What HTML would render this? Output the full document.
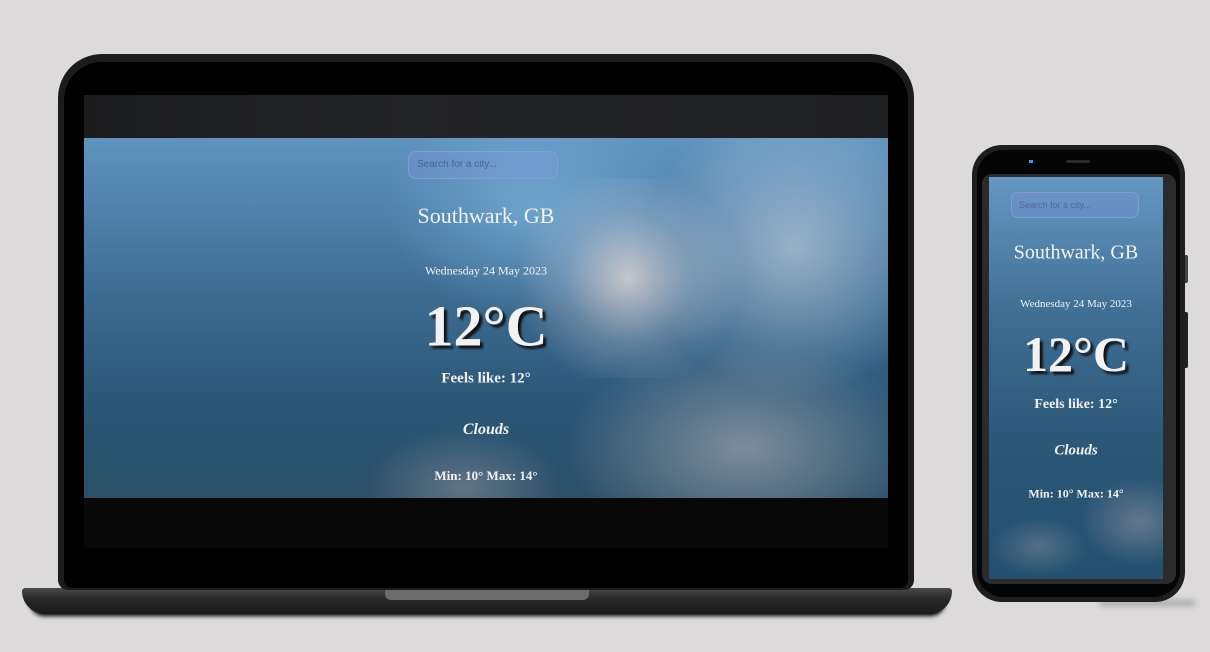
<!DOCTYPE html>
<html><head><style>
*{margin:0;padding:0;box-sizing:border-box}
body{width:1210px;height:652px;background:#dcdadb;position:relative;overflow:hidden;font-family:"Liberation Serif",serif}
.abs{position:absolute}
.t{position:absolute;left:0;right:0;text-align:center;color:#f2f2f2;transform:translateY(-50%)}
</style></head><body>
<div class="abs" style="left:30px;top:602px;width:915px;height:14px;background:#000;border-radius:0 0 40px 40px;filter:blur(2px)"></div>
<div class="abs" style="left:22px;top:588px;width:930px;height:26px;background:linear-gradient(#4a4a4a,#2a2a2a 40%,#1a1a1a);border-radius:4px 4px 30px 30px"></div>
<div class="abs" style="left:385px;top:588px;width:204px;height:12px;background:#6c6c6c;border-radius:0 0 6px 6px"></div>
<div class="abs" style="left:58px;top:54px;width:856px;height:536px;background:#1c1c1c;border-radius:44px 44px 10px 10px"></div>
<div class="abs" style="left:64px;top:62px;width:844px;height:526px;background:#000;border-radius:38px 38px 8px 8px"></div>
<div class="abs" style="left:84px;top:95px;width:804px;height:43px;background:linear-gradient(90deg,#1b1c1e,#242528 40%,#1f2022)"></div>
<div class="abs" style="left:84px;top:498px;width:804px;height:50px;background:#080808"></div>
<div class="abs" style="left:84px;top:138px;width:804px;height:360px;overflow:hidden;background:linear-gradient(180deg,#5f94c0 0%,#3f6f96 40%,#2a5675 75%,#2b5068 100%)">
  <div class="abs" style="left:300px;top:-40px;width:300px;height:220px;background:radial-gradient(ellipse,rgba(130,185,225,.6),rgba(130,185,225,0) 70%)"></div>
  <div class="abs" style="left:420px;top:40px;width:250px;height:200px;background:radial-gradient(circle,rgba(240,225,220,.75),rgba(200,200,210,.3) 40%,rgba(200,200,210,0) 70%)"></div>
  <div class="abs" style="left:560px;top:-40px;width:300px;height:300px;background:radial-gradient(ellipse,rgba(205,215,225,.6),rgba(180,190,200,0) 70%)"></div>
  <div class="abs" style="left:480px;top:200px;width:360px;height:220px;background:radial-gradient(ellipse,rgba(160,165,175,.7),rgba(150,155,165,0) 70%)"></div>
  <div class="abs" style="left:280px;top:290px;width:200px;height:120px;background:radial-gradient(ellipse,rgba(150,150,160,.5),rgba(150,150,160,0) 70%)"></div>
  <div class="abs" style="left:324px;top:13px;width:150px;height:28px;border:1px solid rgba(150,160,230,.6);background:rgba(130,150,220,.3);border-radius:8px;font:10px 'Liberation Sans',sans-serif;color:rgba(60,80,120,.7);padding:7px 8px">Search for a city...</div>
  <div class="t" style="top:78px;font-size:22px;width:804px">Southwark, GB</div>
  <div class="t" style="top:133px;font-size:12px">Wednesday 24 May 2023</div>
  <div class="t" style="top:188px;font-size:58px;font-weight:bold;text-shadow:3px 3px 2px #111">12°C</div>
  <div class="t" style="top:241px;font-size:15px;font-weight:bold">Feels like: 12°</div>
  <div class="t" style="top:292px;font-size:16px;font-weight:bold;font-style:italic">Clouds</div>
  <div class="t" style="top:338px;font-size:13px;font-weight:bold">Min: 10° Max: 14°</div>
</div>
<div class="abs" style="left:1100px;top:600px;width:95px;height:6px;background:#aaa;filter:blur(3px)"></div>
<div class="abs" style="left:1183px;top:255px;width:5px;height:28px;background:#444;border-radius:2px"></div>
<div class="abs" style="left:1183px;top:312px;width:5px;height:56px;background:#222;border-radius:2px"></div>
<div class="abs" style="left:972px;top:145px;width:213px;height:457px;background:#1e1e1e;border-radius:30px"></div>
<div class="abs" style="left:977px;top:150px;width:203px;height:447px;background:#050505;border-radius:26px"></div>
<div class="abs" style="left:1029px;top:160px;width:4px;height:3px;background:#2aa0ff"></div>
<div class="abs" style="left:1066px;top:160px;width:24px;height:3px;background:#2a2a2a;border-radius:2px"></div>
<div class="abs" style="left:982px;top:174px;width:194px;height:410px;background:#2a2b2d;border-radius:10px"></div>
<div class="abs" style="left:989px;top:177px;width:174px;height:402px;overflow:hidden;background:linear-gradient(180deg,#6598c2 0%,#3e6d93 35%,#2c5878 65%,#22506e 100%)">
  <div class="abs" style="left:90px;top:300px;width:120px;height:90px;background:radial-gradient(ellipse,rgba(150,150,165,.55),rgba(150,150,165,0) 70%)"></div>
  <div class="abs" style="left:0px;top:340px;width:100px;height:60px;background:radial-gradient(ellipse,rgba(140,145,160,.45),rgba(140,145,160,0) 70%)"></div>
  <div class="abs" style="left:22px;top:15px;width:128px;height:26px;border:1px solid rgba(150,160,230,.6);background:rgba(130,150,220,.3);border-radius:7px;font:9px 'Liberation Sans',sans-serif;color:rgba(60,80,120,.6);padding:7px 7px">Search for a city...</div>
  <div class="t" style="top:76px;font-size:20px">Southwark, GB</div>
  <div class="t" style="top:127px;font-size:11px">Wednesday 24 May 2023</div>
  <div class="t" style="top:177px;font-size:50px;font-weight:bold;text-shadow:3px 3px 2px #111">12°C</div>
  <div class="t" style="top:228px;font-size:14px;font-weight:bold">Feels like: 12°</div>
  <div class="t" style="top:274px;font-size:15px;font-weight:bold;font-style:italic">Clouds</div>
  <div class="t" style="top:317px;font-size:12px;font-weight:bold">Min: 10° Max: 14°</div>
</div>
</body></html>
